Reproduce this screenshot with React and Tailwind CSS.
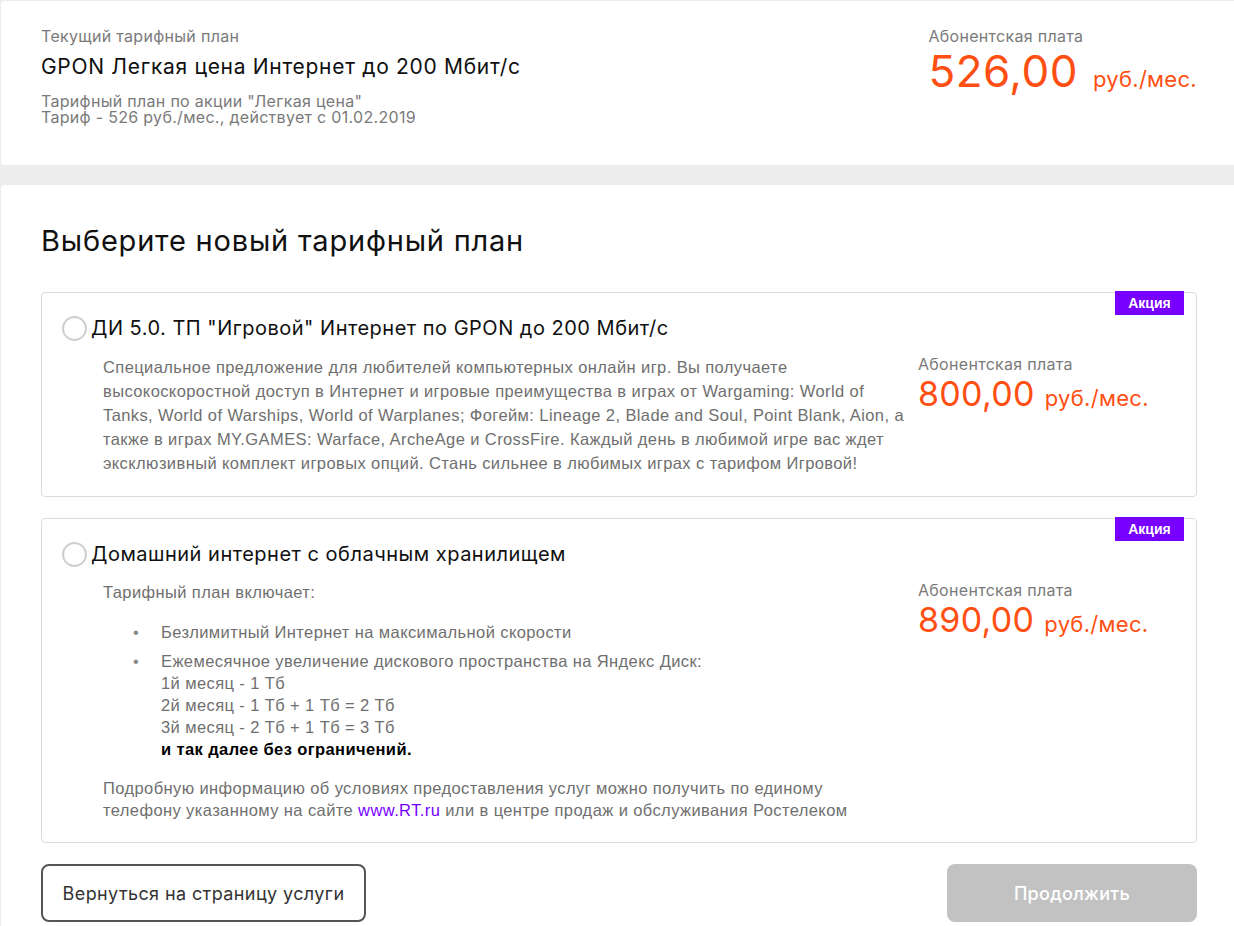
import React, { useState } from 'react';

const plans = [
  {
    id: 'game',
    title: 'ДИ 5.0. ТП "Игровой" Интернет по GPON до 200 Мбит/с',
    price: '800,00',
  },
  {
    id: 'cloud',
    title: 'Домашний интернет с облачным хранилищем',
    price: '890,00',
  },
];

function Price({ value, big }) {
  return (
    <div className="font-['Inter',sans-serif] whitespace-nowrap">
      <div className="text-[16px] leading-[20px] tracking-[0.3px] text-[#7a7a7a]">Абонентская плата</div>
      <div className="flex items-baseline text-[#ff4f12]">
        <span className={big ? 'text-[44px] leading-[50px] tracking-[0.5px]' : 'text-[34px] leading-[40px] tracking-[0.3px]'}>{value}</span>
        <span className={big ? 'ml-[15px] text-[22px] tracking-[0.3px]' : 'ml-[10px] text-[22px] tracking-[0.3px]'}>руб./мес.</span>
      </div>
    </div>
  );
}

function Radio({ checked, onClick }) {
  return (
    <button
      onClick={onClick}
      className="w-[25px] h-[25px] shrink-0 rounded-full border-2 border-[#cfcfcf] bg-white flex items-center justify-center"
    >
      {checked && <span className="w-[11px] h-[11px] rounded-full bg-[#7700ff]" />}
    </button>
  );
}

function PlanCard({ plan, selected, onSelect, children }) {
  return (
    <div className="relative border border-[#dcdcdc] rounded-[4px] pl-[20px] pr-[20px] pt-[21px] pb-[21px]">
      <div className="absolute top-[-2px] right-[12px] w-[69px] h-[24px] bg-[#7700ff] text-white text-[14px] font-bold flex items-center justify-center font-['Liberation_Sans',sans-serif]">
        Акция
      </div>
      <div className="flex items-center gap-[4px]">
        <Radio checked={selected} onClick={onSelect} />
        <div className="text-[20px] leading-[28px] tracking-[0.5px] text-[#101010] font-['Inter',sans-serif]">{plan.title}</div>
      </div>
      <div className="flex mt-[13px]">
        <div className="w-[846px] shrink-0 pl-[41px] font-['Liberation_Sans',sans-serif] text-[16.5px] tracking-[0.4px] text-[#6f6f6f]">
          {children}
        </div>
        <div className="pl-[10px] -mt-[1px]">
          <Price value={plan.price} />
        </div>
      </div>
    </div>
  );
}

function Bullet({ children }) {
  return (
    <li className="flex">
      <span className="w-[28px] shrink-0 text-[#8a8a8a]">•</span>
      <div>{children}</div>
    </li>
  );
}

export default function App() {
  const [selected, setSelected] = useState(null);

  return (
    <div className="min-h-screen bg-[#ededed] pt-px pl-px">
      <div className="bg-white rounded-l-[4px] h-[164px] pl-[40px] pr-[37px] pt-[25px] flex justify-between">
        <div className="font-['Inter',sans-serif]">
          <div className="text-[16px] leading-[20px] tracking-[0.3px] text-[#7a7a7a]">Текущий тарифный план</div>
          <div className="mt-[7px] text-[21px] leading-[28px] tracking-[0.7px] text-[#101010]">GPON Легкая цена Интернет до 200 Мбит/с</div>
          <div className="mt-[12px] text-[16px] leading-[16px] tracking-[0.3px] text-[#7a7a7a]">
            <div>Тарифный план по акции "Легкая цена"</div>
            <div>Тариф - 526 руб./мес., действует с 01.02.2019</div>
          </div>
        </div>
        <div>
          <Price value="526,00" big />
        </div>
      </div>

      <div className="mt-[20px] bg-white rounded-l-[4px] pl-[40px] pr-[37px] pt-[38px] pb-[40px]">
        <h1 className="text-[29px] leading-[36px] tracking-[0.8px] text-[#101010] font-['Inter',sans-serif]">Выберите новый тарифный план</h1>

        <div className="mt-[33px] flex flex-col gap-[21px]">
          <PlanCard plan={plans[0]} selected={selected === 'game'} onSelect={() => setSelected('game')}>
            <p className="leading-[24px] w-[805px]">
              Специальное предложение для любителей компьютерных онлайн игр. Вы получаете высокоскоростной доступ в Интернет и игровые преимущества в играх от Wargaming: World of Tanks, World of Warships, World of Warplanes; Фогейм: Lineage 2, Blade and Soul, Point Blank, Aion, а также в играх MY.GAMES: Warface, ArcheAge и CrossFire. Каждый день в любимой игре вас ждет эксклюзивный комплект игровых опций. Стань сильнее в любимых играх с тарифом Игровой!
            </p>
          </PlanCard>

          <PlanCard plan={plans[1]} selected={selected === 'cloud'} onSelect={() => setSelected('cloud')}>
            <div className="leading-[22px]">
              <p>Тарифный план включает:</p>
              <ul className="mt-[18px] pl-[30px]">
                <Bullet>
                  <div className="mb-[7px]">Безлимитный Интернет на максимальной скорости</div>
                </Bullet>
                <Bullet>
                  Ежемесячное увеличение дискового пространства на Яндекс Диск:
                  <br />1й месяц - 1 Тб
                  <br />2й месяц - 1 Тб + 1 Тб = 2 Тб
                  <br />3й месяц - 2 Тб + 1 Тб = 3 Тб
                  <br /><b className="text-black">и так далее без ограничений.</b>
                </Bullet>
              </ul>
              <p className="mt-[17px] w-[760px]">
                Подробную информацию об условиях предоставления услуг можно получить по единому телефону указанному на сайте <a href="#" className="text-[#7700ff]">www.RT.ru</a> или в центре продаж и обслуживания Ростелеком
              </p>
            </div>
          </PlanCard>
        </div>

        <div className="mt-[21px] flex justify-between font-['Inter',sans-serif]">
          <button className="w-[325px] h-[58px] border-2 border-[#555] rounded-[8px] text-[18px] tracking-[0.4px] text-[#333]">
            Вернуться на страницу услуги
          </button>
          <button className="w-[250px] h-[58px] rounded-[8px] bg-[#c2c2c2] text-[18px] tracking-[0.3px] font-medium text-white">
            Продолжить
          </button>
        </div>
      </div>
    </div>
  );
}
